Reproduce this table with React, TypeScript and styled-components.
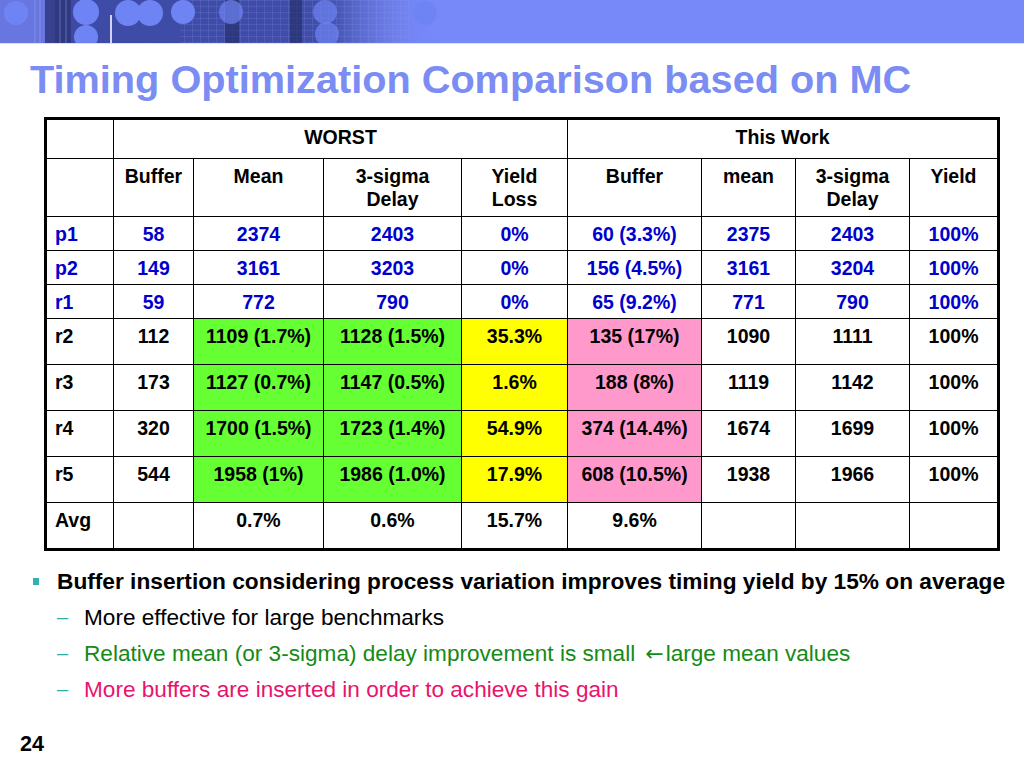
import React from 'react';
import styled, { createGlobalStyle } from 'styled-components';

const GlobalStyle = createGlobalStyle`
  html, body {
    margin: 0;
    padding: 0;
    background: #ffffff;
  }
  body {
    font-family: "Liberation Sans", Arial, sans-serif;
  }
`;

const Slide = styled.div`
  width: 1024px;
  height: 768px;
  overflow: hidden;
  position: relative;
  background: #ffffff;
  display: flex;
  flex-direction: column;
`;

const Banner = styled.div`
  height: 43px;
  flex: none;
  background: #7789f9;
  border-bottom: 1px solid #d8defc;
  overflow: hidden;
  svg {
    display: block;
  }
`;

const Title = styled.h1`
  margin: 12px 0 0 30px;
  font-size: 39.7px;
  line-height: 46px;
  font-weight: bold;
  color: #7b8cf3;
`;

const Table = styled.table`
  margin: 15px 0 0 44px;
  border-collapse: collapse;
  table-layout: fixed;
  width: 953px;
  border: 3px solid #000;
  font-size: 19.5px;
  font-weight: bold;
`;

const Cell = styled.td<{ $bg?: string; $color?: string; $left?: boolean }>`
  border: 1px solid #000;
  padding: 6px 2px 0;
  vertical-align: top;
  text-align: ${(p) => (p.$left ? 'left' : 'center')};
  padding-left: ${(p) => (p.$left ? '8px' : '2px')};
  background: ${(p) => p.$bg || '#fff'};
  color: ${(p) => p.$color || '#000'};
  line-height: 23px;
  white-space: nowrap;
`;

const Row = styled.tr<{ $h: number }>`
  height: ${(p) => p.$h}px;
`;

const List = styled.ul`
  list-style: none;
  margin: 18px 0 0 0;
  padding: 0;
  display: flex;
  flex-direction: column;
  gap: 11px;
`;

const Item = styled.li<{ $sub?: boolean; $color?: string }>`
  display: flex;
  align-items: center;
  font-size: ${(p) => (p.$sub ? '22.6px' : '22.7px')};
  font-weight: ${(p) => (p.$sub ? 'normal' : 'bold')};
  color: ${(p) => p.$color || '#000'};
  padding-left: ${(p) => (p.$sub ? '57px' : '33px')};
  line-height: 25px;
  white-space: nowrap;
`;

const SquareBullet = styled.span`
  width: 6px;
  height: 7px;
  background: #33b0b0;
  margin-right: 18px;
  flex: none;
`;

const Dash = styled.span`
  color: #2ea8ac;
  width: 27px;
  flex: none;
  font-size: 20px;
`;

const Arrow = styled.span`
  font-family: "DejaVu Sans", sans-serif;
  font-size: 22px;
  margin: 0 2px 0 10px;
`;

const PageNum = styled.div`
  position: absolute;
  left: 20px;
  top: 732px;
  font-size: 21.5px;
  font-weight: bold;
  color: #000;
`;

const BannerArt = () => (
  <svg width="1024" height="43" viewBox="0 0 1024 43">
    <defs>
      <linearGradient id="fade" x1="0" x2="1" y1="0" y2="0">
        <stop offset="0" stopColor="#36439c" stopOpacity="0.9" />
        <stop offset="0.75" stopColor="#36439c" stopOpacity="0.85" />
        <stop offset="1" stopColor="#7789f9" stopOpacity="0" />
      </linearGradient>
      <pattern id="grid" width="8" height="6" patternUnits="userSpaceOnUse">
        <path d="M0 0H8M0 0V6" stroke="#8d9be8" strokeWidth="0.6" opacity="0.6" />
      </pattern>
    </defs>
    <rect width="1024" height="43" fill="#7789f9" />
    <rect x="0" width="440" height="43" fill="url(#fade)" />
    <rect x="0" width="55" height="43" fill="#6876e0" />
    <rect x="180" width="230" height="43" fill="url(#grid)" />
    <rect x="45" y="0" width="26" height="43" fill="#2a3478" opacity="0.8" />
    <rect x="225" y="0" width="14" height="43" fill="#27306e" opacity="0.7" />
    <rect x="290" y="0" width="12" height="43" fill="#27306e" opacity="0.7" />
    <rect x="110" y="15" width="2" height="28" fill="#d0d6ff" />
    <g fill="#6f84f4">
      <circle cx="16" cy="13" r="12" />
      <circle cx="86" cy="12" r="13" />
      <circle cx="86" cy="37" r="12" />
      <circle cx="128" cy="13" r="13" />
      <circle cx="150" cy="13" r="13" />
      <circle cx="183" cy="12" r="12" />
      <circle cx="231" cy="12" r="12" opacity="0.7" />
      <circle cx="325" cy="12" r="12" opacity="0.7" />
      <circle cx="327" cy="34" r="12" opacity="0.7" />
      <circle cx="425" cy="13" r="12" />
    </g>
    <g stroke="#a6b1f4" strokeWidth="0.7" opacity="0.6">
      <path d="M35 0V43M40 0V43M60 0V43M66 0V43" />
    </g>
  </svg>
);

const G = '#66ff33';
const Y = '#ffff00';
const P = '#ff99cc';
const B = '#0000cc';

const blueRows: string[][] = [
  ['p1', '58', '2374', '2403', '0%', '60 (3.3%)', '2375', '2403', '100%'],
  ['p2', '149', '3161', '3203', '0%', '156 (4.5%)', '3161', '3204', '100%'],
  ['r1', '59', '772', '790', '0%', '65 (9.2%)', '771', '790', '100%'],
];

const colorRows: string[][] = [
  ['r2', '112', '1109 (1.7%)', '1128 (1.5%)', '35.3%', '135 (17%)', '1090', '1111', '100%'],
  ['r3', '173', '1127 (0.7%)', '1147 (0.5%)', '1.6%', '188 (8%)', '1119', '1142', '100%'],
  ['r4', '320', '1700 (1.5%)', '1723 (1.4%)', '54.9%', '374 (14.4%)', '1674', '1699', '100%'],
  ['r5', '544', '1958 (1%)', '1986 (1.0%)', '17.9%', '608 (10.5%)', '1938', '1966', '100%'],
];

const bgFor = (i: number) => (i === 2 || i === 3 ? G : i === 4 ? Y : i === 5 ? P : undefined);

const widths = [68, 80, 130, 138, 106, 134, 94, 114, 89];

export default function App() {
  return (
    <Slide>
      <GlobalStyle />
      <Banner>
        <BannerArt />
      </Banner>
      <Title>Timing Optimization Comparison based on MC</Title>
      <Table>
        <colgroup>
          {widths.map((w, i) => (
            <col key={i} style={{ width: w }} />
          ))}
        </colgroup>
        <tbody>
          <Row $h={40}>
            <Cell />
            <Cell colSpan={4}>WORST</Cell>
            <Cell colSpan={4}>This Work</Cell>
          </Row>
          <Row $h={58}>
            <Cell />
            <Cell>Buffer</Cell>
            <Cell>Mean</Cell>
            <Cell>
              3-sigma
              <br />
              Delay
            </Cell>
            <Cell>
              Yield
              <br />
              Loss
            </Cell>
            <Cell>Buffer</Cell>
            <Cell>mean</Cell>
            <Cell>
              3-sigma
              <br />
              Delay
            </Cell>
            <Cell>Yield</Cell>
          </Row>
          {blueRows.map((r) => (
            <Row $h={34} key={r[0]}>
              {r.map((v, i) => (
                <Cell key={i} $left={i === 0} $color={B}>
                  {v}
                </Cell>
              ))}
            </Row>
          ))}
          {colorRows.map((r) => (
            <Row $h={46} key={r[0]}>
              {r.map((v, i) => (
                <Cell key={i} $left={i === 0} $bg={bgFor(i)}>
                  {v}
                </Cell>
              ))}
            </Row>
          ))}
          <Row $h={47}>
            <Cell $left>Avg</Cell>
            <Cell />
            <Cell>0.7%</Cell>
            <Cell>0.6%</Cell>
            <Cell>15.7%</Cell>
            <Cell>9.6%</Cell>
            <Cell />
            <Cell />
            <Cell />
          </Row>
        </tbody>
      </Table>
      <List>
        <Item>
          <SquareBullet />
          Buffer insertion considering process variation improves timing yield by 15% on average
        </Item>
        <Item $sub>
          <Dash>–</Dash>More effective for large benchmarks
        </Item>
        <Item $sub $color="#168a16">
          <Dash>–</Dash>Relative mean (or 3-sigma) delay improvement is small<Arrow>←</Arrow>large mean values
        </Item>
        <Item $sub $color="#e8146c">
          <Dash>–</Dash>More buffers are inserted in order to achieve this gain
        </Item>
      </List>
      <PageNum>24</PageNum>
    </Slide>
  );
}
